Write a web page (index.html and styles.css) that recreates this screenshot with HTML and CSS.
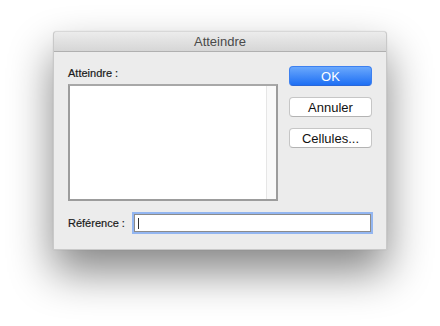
FILE: index.html
```html
<!doctype html>
<html lang="fr">
<head>
<meta charset="utf-8">
<title>Atteindre</title>
<link rel="stylesheet" href="styles.css">
</head>
<body>
  <div class="dialog">
    <div class="titlebar">Atteindre</div>
    <div class="content">
      <div class="top">
        <div class="left">
          <div class="label">Atteindre :</div>
          <div class="list">
            <div class="list_scroll"></div>
          </div>
        </div>
        <div class="buttons">
          <div class="btn btn_default">OK</div>
          <div class="btn">Annuler</div>
          <div class="btn">Cellules...</div>
        </div>
      </div>
      <div class="ref">
        <div class="label">Référence :</div>
        <div class="input"><span class="caret"></span></div>
      </div>
    </div>
  </div>
</body>
</html>
```

FILE: styles.css
```css
* {
  margin: 0;
  padding: 0;
  box-sizing: border-box;
}
html,
body {
  height: 100%;
}
body {
  min-height: 326px;
  padding-top: 31px;
  background-color: #fff;
  font-family: "Liberation Sans", Arial, sans-serif;
  color: #1e1e1e;
}
.dialog {
  width: 334px;
  height: 219px;
  margin-left: 53px;
  background-color: #ececec;
  border: 1px solid #c9c9c9;
  border-top-color: #d8d8d8;
  border-radius: 4px 4px 0 0;
  box-shadow: 0 22px 44px rgba(0, 0, 0, 0.48), 0 0 1px rgba(0, 0, 0, 0.2);
}
.titlebar {
  height: 20px;
  line-height: 19px;
  text-align: center;
  font-size: 13px;
  color: #4a4a4a;
  background: linear-gradient(#ececec, #d6d6d6);
  border-bottom: 1px solid #b0b0b0;
  border-radius: 4px 4px 0 0;
}
.content {
  padding: 14px 14px 0 14px;
}
.top {
  display: flex;
  gap: 11px;
}
.left {
  width: 210px;
}
.label {
  font-size: 11px;
  line-height: 14px;
  color: #1a1a1a;
  white-space: nowrap;
  -webkit-text-stroke: 0.2px #1a1a1a;
}
.left .label {
  margin-bottom: 4px;
}
.list {
  height: 117px;
  background-color: #fff;
  border: 2px solid #9c9c9c;
  border-top-color: #a8a8a8;
  display: flex;
  justify-content: flex-end;
}
.list_scroll {
  width: 10px;
  background-color: #f9f9f9;
  border-left: 1px solid #e6e6e6;
}
.buttons {
  width: 83px;
  display: flex;
  flex-direction: column;
  gap: 11px;
}
.btn {
  height: 20px;
  line-height: 19px;
  text-align: center;
  font-size: 13px;
  color: #111;
  background-color: #fff;
  border: 1px solid #c6c6c6;
  border-bottom-color: #b3b3b3;
  border-radius: 4px;
}
.btn_default {
  color: #fff;
  background: linear-gradient(#6aa8fc, #1e6ff4);
  border: 1px solid #3d80f0;
  border-bottom-color: #2a67d8;
}
.ref {
  margin-top: 13px;
  padding-right: 1px;
  display: flex;
  align-items: center;
  gap: 9px;
}
.input {
  flex: 1;
  height: 18px;
  background-color: #fff;
  border: 1px solid #8b8b8b;
  box-shadow: 0 0 0 2px #93b6f1;
  padding: 3px 0 0 3px;
}
.caret {
  display: block;
  width: 1px;
  height: 11px;
  background-color: #333;
}
```
